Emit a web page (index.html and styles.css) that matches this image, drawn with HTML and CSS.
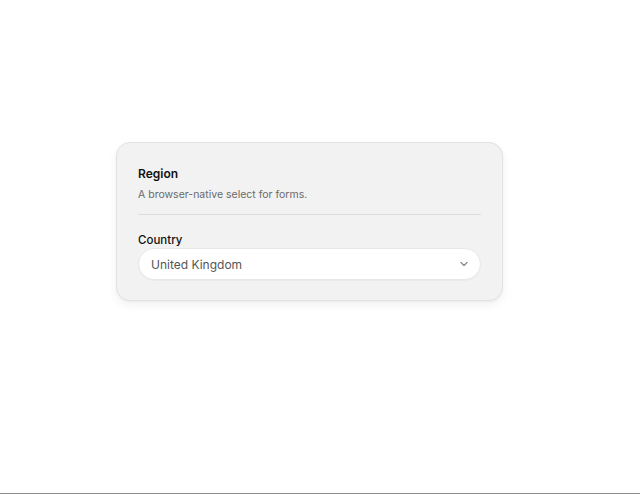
FILE: index.html
```html
<!DOCTYPE html>
<html>
<head>
<meta charset="utf-8">
<link rel="stylesheet" href="styles.css">
</head>
<body>
<div class="page">
  <section class="card">
    <header class="head">
      <h2 class="title">Region</h2>
      <p class="desc">A browser-native select for forms.</p>
    </header>
    <div class="field">
      <label class="label" for="country">Country</label>
      <div class="select-wrap">
        <select id="country" class="select">
          <option>United Kingdom</option>
          <option>United States</option>
          <option>Germany</option>
          <option>France</option>
        </select>
        <svg class="chev" width="10" height="10" viewBox="0 0 10 10" aria-hidden="true">
          <path d="M2 3.5 L5 6.5 L8 3.5" fill="none" stroke="#8a8a8a" stroke-width="1.3" stroke-linecap="round" stroke-linejoin="round"/>
        </svg>
      </div>
    </div>
  </section>
</div>
</body>
</html>
```

FILE: styles.css
```css
* { box-sizing: border-box; }
html, body { margin: 0; padding: 0; }
body {
  background: #ffffff;
  font-family: Inter, "Liberation Sans", sans-serif;
  color: #111;
  height: 494px;
  border-bottom: 1px solid #8c8c8c;
  overflow: hidden;
}
.page {
  padding: 142px 0 0 116px;
}
.card {
  width: 387px;
  background: #f2f2f2;
  border: 1px solid #e2e2e2;
  border-radius: 14px;
  padding: 22px 21px 20px 21px;
  box-shadow: 0 4px 10px rgba(0,0,0,0.06), 0 1px 2px rgba(0,0,0,0.04);
}
.head {
  padding-bottom: 11px;
  border-bottom: 1px solid #dedede;
}
.title {
  margin: 0;
  font-size: 12px;
  font-weight: 600;
  line-height: 18px;
  color: #111;
}
.desc {
  margin: 4px 0 0 0;
  font-size: 10.5px;
  line-height: 16px;
  color: #6a6a6a;
}
.field {
  padding-top: 17px;
}
.label {
  display: block;
  font-size: 11.5px;
  font-weight: 500;
  line-height: 16px;
  color: #111;
  margin-bottom: 0;
}
.select-wrap {
  display: flex;
  align-items: center;
  position: relative;
}
.select {
  appearance: none;
  -webkit-appearance: none;
  width: 100%;
  height: 32px;
  border: 1px solid #e8e8e8;
  border-radius: 16px;
  background: #ffffff;
  padding: 0 30px 0 12px;
  font-family: Inter, "Liberation Sans", sans-serif;
  font-size: 12px;
  color: #555;
  box-shadow: 0 1px 1px rgba(0,0,0,0.03);
  outline: none;
}
.chev {
  position: absolute;
  right: 12px;
  top: 11px;
  pointer-events: none;
}
```
